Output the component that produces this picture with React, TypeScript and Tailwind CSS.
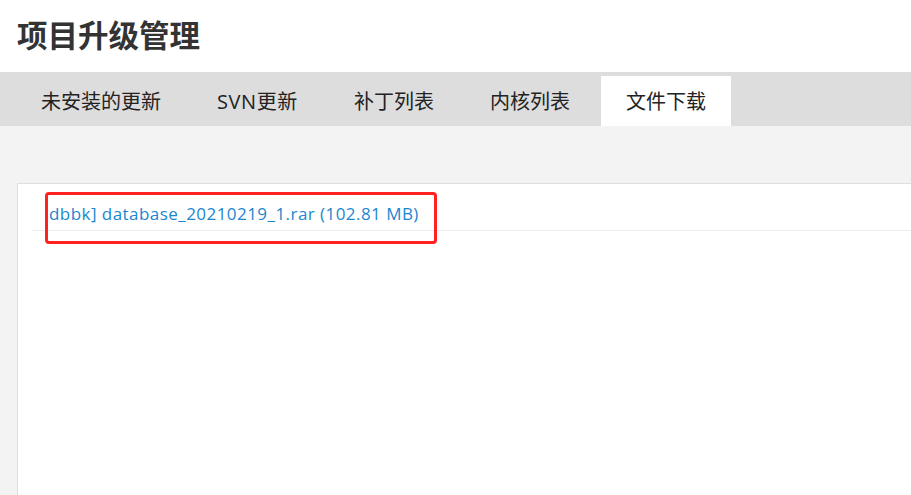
const tabs = [
  { label: "未安装的更新", cls: "" },
  { label: "SVN更新", cls: "tracking-[0.6px]" },
  { label: "补丁列表", cls: "" },
  { label: "内核列表", cls: "" },
  { label: "文件下载", cls: "bg-white" },
];

export default function App() {
  return (
    <div
      className="w-[911px] h-[495px] overflow-hidden bg-white text-[#222]"
      style={{ fontFamily: '"Open Sans", "Noto Sans CJK SC", sans-serif' }}
    >
      {/* header */}
      <div className="h-[72px] pl-[17px] flex items-center">
        <h1 className="text-[30.5px] font-bold text-[#333] leading-none -mt-[2px]">项目升级管理</h1>
      </div>

      {/* tabs */}
      <div className="h-[54px] bg-[#dddddd] flex items-end pl-[16px] gap-[6px]">
        {tabs.map((t) => (
          <div key={t.label} className={"h-[50px] px-[25px] pt-[2px] flex items-center text-[20px] " + t.cls}>
            {t.label}
          </div>
        ))}
      </div>

      {/* body */}
      <div className="bg-[#f3f3f3] pt-[57px] pl-[17px] h-[369px]">
        <div className="relative h-full bg-white border-l border-t border-[#dedede]">
          <div className="ml-[14px] pl-[17px] h-[47px] flex items-center border-b border-[#ececec]">
            <a className="text-[17px] tracking-[0.45px] text-[#1a87cf] whitespace-nowrap pt-[14px]">
              dbbk] database_20210219_1.rar (102.81 MB)
            </a>
          </div>
          {/* annotation box */}
          <div className="absolute left-[27px] top-[8px] w-[392px] h-[52px] border-[3px] border-[#ff2020] rounded-[4px]" />
        </div>
      </div>
    </div>
  );
}
